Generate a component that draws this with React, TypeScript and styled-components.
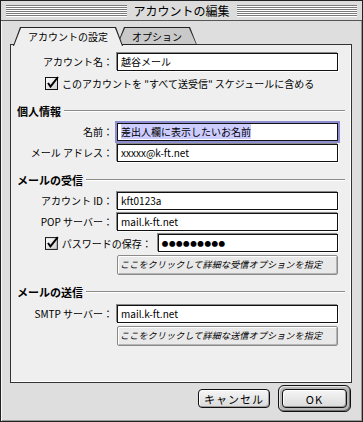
import React from 'react';
import styled, { createGlobalStyle } from 'styled-components';

const GlobalStyle = createGlobalStyle`
  html, body {
    margin: 0;
    padding: 0;
    background: #ffffff;
  }
  body {
    font-family: "Noto Sans CJK JP", "Noto Sans", sans-serif;
    font-size: 10px;
    color: #000;
  }
`;

const Window = styled.div`
  width: 363px;
  height: 422px;
  box-sizing: border-box;
  border: 1px solid #222;
  background: #dedede;
  display: flex;
  flex-direction: column;
  box-shadow: inset 1px 1px 0 #f8f8f8, inset -1px -1px 0 #9a9a9a;
`;

const TitleBar = styled.div`
  height: 20px;
  box-sizing: border-box;
  display: flex;
  align-items: center;
  gap: 5px;
  padding: 0 5px 0 5px;
  border-bottom: 1px solid #555;
  background: #dcdcdc;
`;

const Stripes = styled.div`
  flex: 1;
  height: 12px;
  background: repeating-linear-gradient(to bottom, #7a7a7a 0 1px, #ffffff 1px 2px);
`;

const Title = styled.div`
  font-size: 12px;
  line-height: 20px;
  padding: 0 2px;
`;

const Body = styled.div`
  padding: 6px 10px 0 9px;
  display: flex;
  flex-direction: column;
`;

const TabRow = styled.div`
  display: flex;
  padding-left: 3px;
  height: 18px;
  position: relative;
  z-index: 2;
`;

const Tab = styled.div<{ $active?: boolean; $width: number }>`
  position: relative;
  width: ${p => p.$width}px;
  height: ${p => (p.$active ? 19 : 18)}px;
  margin-left: ${p => (p.$active ? 0 : -6)}px;
  z-index: ${p => (p.$active ? 2 : 1)};
  display: flex;
  align-items: center;
  justify-content: center;
  font-size: 10px;
  padding-bottom: ${p => (p.$active ? 1 : 0)}px;
  box-sizing: border-box;

  &::before,
  &::after {
    content: '';
    position: absolute;
    z-index: -1;
    clip-path: polygon(7px 0, calc(100% - 7px) 0, 100% 100%, 0 100%);
  }
  &::before {
    inset: 0;
    background: #222;
  }
  &::after {
    inset: 1px 1px ${p => (p.$active ? 0 : 1)}px 1px;
    background: ${p => (p.$active ? '#efefef' : '#c9c9c9')};
  }
`;

const Panel = styled.div`
  margin-top: -1px;
  height: 339px;
  box-sizing: border-box;
  border: 1px solid #333;
  background: #efefef;
  box-shadow: inset -1px -1px 0 #fff;
  padding: 8px 6px 0 6px;
  display: flex;
  flex-direction: column;
  position: relative;
  z-index: 1;
`;

const Row = styled.div<{ $top?: number }>`
  display: grid;
  grid-template-columns: 100px 221px;
  align-items: center;
  margin-top: ${p => p.$top ?? 3}px;
`;

const Label = styled.div`
  text-align: right;
  padding-right: 4px;
  white-space: nowrap;
  line-height: 18px;
`;

const Field = styled.div<{ $width?: number; $focused?: boolean }>`
  width: ${p => p.$width ?? 221}px;
  height: 18px;
  box-sizing: border-box;
  border: 1px solid #111;
  background: #fff;
  padding: 0 3px;
  line-height: 16px;
  font-size: 10px;
  white-space: nowrap;
  overflow: hidden;
  box-shadow: ${p =>
    p.$focused ? '0 0 0 2px #8d8dd2' : '-1px -1px 0 #8a8a8a, 1px 1px 0 #ffffff'};
`;

const Selected = styled.span`
  background: #ccccff;
`;

const Dots = styled.span`
  letter-spacing: 0.6px;
  font-size: 6.5px;
  vertical-align: 1px;
`;

const CheckRow = styled.div<{ $top?: number }>`
  display: flex;
  align-items: center;
  gap: 3px;
  padding-left: 28px;
  margin-top: ${p => p.$top ?? 3}px;
  height: 18px;
  white-space: nowrap;
`;

const PasswordRow = styled(CheckRow)`
  width: 321px;
  box-sizing: border-box;
`;

const Spacer = styled.div`
  flex: 1;
`;

const Section = styled.div<{ $top: number }>`
  display: flex;
  align-items: center;
  gap: 3px;
  margin-top: ${p => p.$top}px;
  height: 14px;
  font-weight: bold;
  font-size: 11px;
`;

const Rule = styled.div`
  flex: 1;
  border-top: 1px solid #8c8c8c;
  border-bottom: 1px solid #ffffff;
`;

const OptionButton = styled.div<{ $top?: number }>`
  margin-left: 100px;
  margin-top: ${p => p.$top ?? 3}px;
  width: 221px;
  height: 20px;
  box-sizing: border-box;
  border: 1px solid #8a8a8a;
  border-radius: 2px;
  background: #e9e9e9;
  box-shadow: inset 1px 1px 0 #fff, inset -1px -1px 0 #b4b4b4;
  font-size: 9px;
  font-style: oblique;
  color: #000;
  line-height: 18px;
  padding-left: 2px;
  white-space: nowrap;
  letter-spacing: 0.2px;
`;

const Footer = styled.div`
  display: flex;
  justify-content: flex-end;
  align-items: center;
  gap: 8px;
  padding: 2px 1px 0 0;
`;

const PushButton = styled.div<{ $width: number }>`
  width: ${p => p.$width}px;
  height: 19px;
  box-sizing: border-box;
  border: 1px solid #111;
  border-radius: 4px;
  background: linear-gradient(#f6f6f6, #dadada);
  box-shadow: inset 1px 1px 0 #fff, inset -1px -1px 0 #9c9c9c;
  display: flex;
  align-items: center;
  justify-content: center;
  font-size: 11px;
  letter-spacing: 1px;
`;

const DefaultRing = styled.div`
  border: 1px solid #111;
  border-radius: 6px;
  padding: 3px;
  background: #b8b8b8;
  box-shadow: inset 1px 1px 0 #e6e6e6, inset -1px -1px 0 #707070;
`;

const CheckBox: React.FC = () => (
  <svg width="14" height="14" viewBox="0 0 14 14">
    <defs>
      <linearGradient id="cbg" x1="0" y1="0" x2="1" y2="1">
        <stop offset="0" stopColor="#ffffff" />
        <stop offset="1" stopColor="#cfcfcf" />
      </linearGradient>
    </defs>
    <rect x="0.5" y="1.5" width="12" height="12" fill="url(#cbg)" stroke="#111" />
    <path d="M3 7 L5.5 10.5 L13 1" fill="none" stroke="#000" strokeWidth="2" />
  </svg>
);

const App: React.FC = () => {
  return (
    <>
      <GlobalStyle />
      <Window>
        <TitleBar>
          <Stripes />
          <Title>アカウントの編集</Title>
          <Stripes />
        </TitleBar>
        <Body>
          <TabRow>
            <Tab $active $width={110}>アカウントの設定</Tab>
            <Tab $width={80}>オプション</Tab>
          </TabRow>
          <Panel>
            <Row $top={0}>
              <Label>アカウント名：</Label>
              <Field>越谷メール</Field>
            </Row>
            <CheckRow $top={3}>
              <CheckBox />
              <span>このアカウントを "すべて送受信" スケジュールに含める</span>
            </CheckRow>
            <Section $top={12}>
              <span>個人情報</span>
              <Rule />
            </Section>
            <Row $top={5}>
              <Label>名前：</Label>
              <Field $focused>
                <Selected>差出人欄に表示したいお名前</Selected>
              </Field>
            </Row>
            <Row>
              <Label>メール アドレス：</Label>
              <Field>xxxxx@k-ft.net</Field>
            </Row>
            <Section $top={11}>
              <span>メールの受信</span>
              <Rule />
            </Section>
            <Row $top={5}>
              <Label>アカウント ID：</Label>
              <Field>kft0123a</Field>
            </Row>
            <Row>
              <Label>POP サーバー：</Label>
              <Field>mail.k-ft.net</Field>
            </Row>
            <PasswordRow>
              <CheckBox />
              <span>パスワードの保存：</span>
              <Spacer />
              <Field $width={183}>
                <Dots>●●●●●●●●●</Dots>
              </Field>
            </PasswordRow>
            <OptionButton>ここをクリックして詳細な受信オプションを指定</OptionButton>
            <Section $top={10}>
              <span>メールの送信</span>
              <Rule />
            </Section>
            <Row $top={6}>
              <Label>SMTP サーバー：</Label>
              <Field>mail.k-ft.net</Field>
            </Row>
            <OptionButton $top={3}>ここをクリックして詳細な送信オプションを指定</OptionButton>
          </Panel>
          <Footer>
            <PushButton $width={72}>キャンセル</PushButton>
            <DefaultRing>
              <PushButton $width={65}>OK</PushButton>
            </DefaultRing>
          </Footer>
        </Body>
      </Window>
    </>
  );
};

export default App;
